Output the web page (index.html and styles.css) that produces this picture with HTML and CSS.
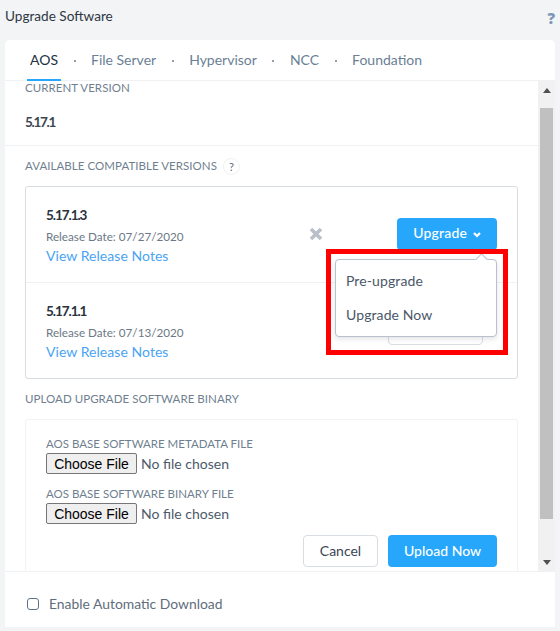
FILE: index.html
```html
<!DOCTYPE html>
<html lang="en">
<head>
  <meta charset="UTF-8" />
  <title>Upgrade Software</title>
  <link rel="stylesheet" href="styles.css">
</head>
<body>
  <div class="page-head">
    <span class="page-title">Upgrade Software</span>
    <span class="page-help">?</span>
  </div>

  <div class="panel">
    <div class="tabs">
      <a class="tab active">AOS</a><span class="tab-dot"></span>
      <a class="tab">File Server</a><span class="tab-dot"></span>
      <a class="tab">Hypervisor</a><span class="tab-dot"></span>
      <a class="tab">NCC</a><span class="tab-dot"></span>
      <a class="tab">Foundation</a>
    </div>

    <div class="scroll-area">
      <div class="content">
        <div class="current">
          <div class="section-label">Current Version</div>
          <div class="current-value">5.17.1</div>
        </div>

        <div class="available">
          <div class="section-label with-help">Available Compatible Versions <span class="help-circle">?</span></div>
          <div class="version-card">
            <div class="version-row">
              <div class="version-info">
                <div class="version-num">5.17.1.3</div>
                <div class="version-date">Release Date: 07/27/2020</div>
                <a class="version-link">View Release Notes</a>
              </div>
              <svg class="version-x" width="14" height="14" viewBox="0 0 14 14"><path d="M2 2l10 10M12 2L2 12" stroke="#b9c0c9" stroke-width="3.6" fill="none"/></svg>
              <button class="btn btn-primary btn-upgrade">Upgrade
                <svg width="8" height="6" viewBox="0 0 8 6"><path d="M1 1l3 3 3-3" stroke="#fff" stroke-width="2.2" fill="none"/></svg>
              </button>
            </div>
            <div class="version-row second">
              <div class="version-info">
                <div class="version-num">5.17.1.1</div>
                <div class="version-date">Release Date: 07/13/2020</div>
                <a class="version-link">View Release Notes</a>
              </div>
              <div class="btn btn-plain btn-hidden-behind"></div>
            </div>
          </div>
        </div>

        <div class="section-label upload-label">Upload Upgrade Software Binary</div>
        <div class="upload-card">
          <div class="file-label">AOS Base Software Metadata File</div>
          <input class="file-input" type="file" />
          <div class="file-label second">AOS Base Software Binary File</div>
          <input class="file-input" type="file" />
          <div class="upload-actions">
            <button class="btn btn-plain btn-cancel">Cancel</button>
            <button class="btn btn-primary btn-upload">Upload Now</button>
          </div>
        </div>
      </div>

      <div class="scrollbar">
        <svg class="scroll-arrow" width="8" height="5" viewBox="0 0 8 5"><path d="M4 0l4 5H0z" fill="#505050"/></svg>
        <div class="scroll-thumb"></div>
        <svg class="scroll-arrow" width="8" height="5" viewBox="0 0 8 5"><path d="M0 0h8L4 5z" fill="#505050"/></svg>
      </div>
    </div>

    <div class="panel-foot">
      <input class="auto-check" type="checkbox" id="auto" />
      <label class="auto-label" for="auto">Enable Automatic Download</label>
    </div>
  </div>

  <div class="menu">
    <div class="menu-item">Pre-upgrade</div>
    <div class="menu-item">Upgrade Now</div>
  </div>
  <div class="callout"></div>
</body>
</html>
```

FILE: styles.css
```css
* {
  box-sizing: border-box;
}
html, body {
  height: 100%;
}
body {
  margin: 0;
  background: #f2f4f6;
  font-family: 'Lato', 'Noto Sans', sans-serif;
  font-size: 14px;
  color: #4c5a6b;
  overflow: hidden;
  position: relative;
}
.page-head {
  height: 40px;
  display: flex;
  justify-content: space-between;
  padding: 6px 5px 0 5px;
}
.page-title {
  font-size: 13.6px;
  line-height: 20px;
  color: #2f3742;
}
.page-help {
  font-family: 'Open Sans', sans-serif;
  font-size: 15px;
  font-weight: 800;
  line-height: 24px;
  color: #7f96b4;
}
.panel {
  width: 550px;
  height: 587px;
  margin-left: 5px;
  background: #fff;
  border-radius: 5px 5px 0 0;
  display: flex;
  flex-direction: column;
}
.tabs {
  height: 41px;
  flex: none;
  display: flex;
  padding-left: 22px;
  border-bottom: 1px solid #eff1f4;
}
.tab {
  padding: 0 3px;
  height: 41px;
  line-height: 40px;
  font-size: 14px;
  color: #6a7f95;
}
.tab.active {
  color: #22303f;
  border-bottom: 2px solid #26a7fb;
}
.tab-dot {
  width: 27px;
  display: flex;
  align-items: center;
  justify-content: center;
  height: 41px;
}
.tab-dot::before {
  content: '';
  width: 2px;
  height: 2px;
  margin-top: 1px;
  border-radius: 50%;
  background: #6a7f95;
}
.scroll-area {
  flex: none;
  height: 490px;
  display: flex;
}
.content {
  width: 533px;
  overflow: hidden;
}
.scrollbar {
  width: 17px;
  flex: none;
  background: #f1f1f1;
  display: flex;
  flex-direction: column;
  align-items: center;
  padding-top: 7px;
}
.scroll-arrow {
  flex: none;
}
.scroll-thumb {
  width: 13px;
  height: 411px;
  margin: 15px 0 41px;
  background: #c0c0c0;
}
.section-label {
  font-size: 11.5px;
  line-height: 14px;
  letter-spacing: 0.05px;
  text-transform: uppercase;
  color: #6f7f90;
}
.current {
  height: 65px;
  padding: 0 20px;
  border-bottom: 1px solid #eff1f4;
}
.current-value {
  margin-top: 19px;
  font-size: 13.5px;
  line-height: 16px;
  font-weight: 700;
  letter-spacing: -1.3px;
  color: #3c4652;
}
.available {
  padding: 11px 20px 0;
}
.with-help {
  display: flex;
  align-items: center;
  gap: 6px;
  height: 18px;
}
.help-circle {
  width: 17px;
  height: 17px;
  border: 1px solid #eef0f3;
  border-radius: 50%;
  font-size: 11px;
  line-height: 15px;
  text-align: center;
  color: #5b6b7c;
}
.version-card {
  margin-top: 11px;
  width: 493px;
  height: 193px;
  border: 1px solid #d8dce3;
  border-radius: 3px;
}
.version-row {
  height: 96px;
  padding: 20px 20px 0;
  display: flex;
  border-bottom: 1px solid #eff1f4;
}
.version-row.second {
  height: 95px;
  border-bottom: none;
}
.version-info {
  width: 263px;
  flex: none;
}
.version-num {
  font-size: 13.5px;
  line-height: 17px;
  font-weight: 700;
  letter-spacing: -1.05px;
  color: #2a323c;
}
.version-date {
  margin-top: 4px;
  font-size: 11.7px;
  line-height: 16px;
  color: #6c7885;
}
.version-link {
  display: block;
  margin-top: 3px;
  font-size: 14px;
  line-height: 18px;
  letter-spacing: 0.05px;
  color: #4aa3f5;
}
.version-x {
  margin-top: 20px;
}
.btn {
  font-family: inherit;
  font-size: 14px;
  border-radius: 4px;
  height: 32px;
  padding: 0;
}
.btn-primary {
  background: #26a7fb;
  border: none;
  color: #fff;
  padding-bottom: 1px;
}
.btn-plain {
  background: #fff;
  border: 1px solid #d8dce3;
  color: #3a4553;
  padding-bottom: 1px;
}
.btn-upgrade {
  width: 100px;
  margin: 11px 0 0 74px;
  padding-bottom: 3px;
  font-weight: 500;
  letter-spacing: 0.2px;
}
.btn-upgrade svg {
  margin-left: 2px;
  vertical-align: 0;
}
.btn-hidden-behind {
  width: 95px;
  margin: 10px 0 0 79px;
}
.upload-label {
  margin: 13px 20px 0;
}
.upload-card {
  margin: 13px 0 0 20px;
  width: 493px;
  height: 170px;
  padding: 17px 20px 0;
  border: 1px solid #f2f3f6;
  border-bottom: none;
  border-radius: 3px 3px 0 0;
}
.file-label {
  font-size: 11.5px;
  line-height: 14px;
  text-transform: uppercase;
  color: #6f7f90;
}
.file-label.second {
  margin-top: 13px;
}
.file-input {
  display: block;
  margin-top: 2px;
  font-family: inherit;
  font-size: 14px;
  color: #4c5a6b;
}
.file-input::file-selector-button {
  width: 91px;
  height: 21px;
  margin-right: 4px;
  padding: 0;
  font-family: 'Liberation Sans', sans-serif;
  font-size: 14px;
  color: #000;
  background: #efefef;
  border: 1px solid #767676;
  border-radius: 2px;
}
.upload-actions {
  display: flex;
  justify-content: flex-end;
  gap: 10px;
  margin-top: 11px;
}
.btn-cancel {
  width: 75px;
}
.btn-upload {
  width: 109px;
  font-weight: 500;
}
.panel-foot {
  flex: 1;
  display: flex;
  align-items: center;
  padding: 8px 0 0 22px;
  border-top: 1px solid #eff1f4;
}
.auto-check {
  width: 12px;
  height: 12px;
  margin: 0;
  appearance: none;
  background: #fff;
  border: 1px solid #5f7288;
  border-radius: 3px;
}
.auto-label {
  margin-left: 10px;
  font-size: 13.9px;
  color: #5f6d7d;
}
.menu {
  position: absolute;
  left: 335px;
  top: 259px;
  width: 162px;
  height: 78px;
  padding: 5px 0;
  background: #fff;
  border: 1px solid #b9c0cf;
  border-radius: 4px;
  box-shadow: 0 2px 5px rgba(60, 70, 90, 0.15);
}
.menu::before {
  content: '';
  position: absolute;
  right: 10px;
  top: -5px;
  width: 8px;
  height: 8px;
  background: #fff;
  border-left: 1px solid #b9c0cf;
  border-top: 1px solid #b9c0cf;
  transform: rotate(45deg);
}
.menu-item {
  height: 34px;
  padding-left: 10px;
  line-height: 32px;
  font-size: 14px;
  color: #4a5768;
  letter-spacing: 0.1px;
}
.callout {
  position: absolute;
  left: 326px;
  top: 249px;
  width: 182px;
  height: 106px;
  border: 5px solid #ff0000;
}
```
